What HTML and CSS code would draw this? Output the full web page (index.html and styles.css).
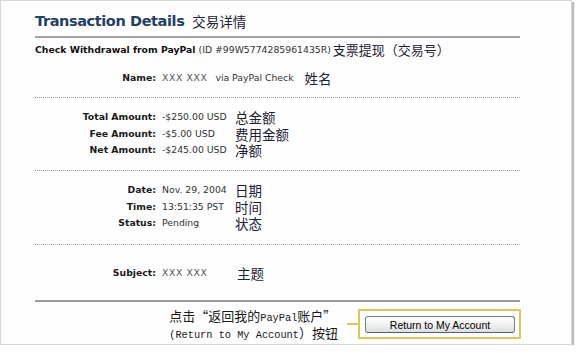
FILE: index.html
```html
<!DOCTYPE html>
<html lang="zh-CN">
<head>
  <meta charset="UTF-8">
  <meta name="viewport" content="width=device-width, initial-scale=1.0">
  <title>Transaction Details</title>
  <link rel="stylesheet" href="styles.css">
</head>
<body>
  <div class="frame">
    <h1 class="title">
      <span class="title-en">Transaction Details</span>
      <span class="cn title-cn">交易详情</span>
    </h1>

    <div class="headline">
      <b>Check Withdrawal from PayPal</b>
      <span class="txn-id">(ID #99W5774285961435R)</span>
      <span class="cn head-cn">支票提现（交易号）</span>
    </div>

    <div class="section name-section">
      <div class="row">
        <span class="label">Name:</span>
        <span class="value"><span class="xxx">XXX XXX</span><span class="via">via PayPal Check</span></span>
        <span class="cn note name-note">姓名</span>
      </div>
    </div>

    <div class="section amount-section">
      <div class="row">
        <span class="label">Total Amount:</span>
        <span class="value">-$250.00 USD</span>
        <span class="cn note">总金额</span>
      </div>
      <div class="row">
        <span class="label">Fee Amount:</span>
        <span class="value">-$5.00 USD</span>
        <span class="cn note">费用金额</span>
      </div>
      <div class="row">
        <span class="label">Net Amount:</span>
        <span class="value">-$245.00 USD</span>
        <span class="cn note">净额</span>
      </div>
    </div>

    <div class="section date-section">
      <div class="row">
        <span class="label">Date:</span>
        <span class="value">Nov. 29, 2004</span>
        <span class="cn note">日期</span>
      </div>
      <div class="row">
        <span class="label">Time:</span>
        <span class="value">13:51:35 PST</span>
        <span class="cn note">时间</span>
      </div>
      <div class="row">
        <span class="label">Status:</span>
        <span class="value">Pending</span>
        <span class="cn note">状态</span>
      </div>
    </div>

    <div class="section subject-section">
      <div class="row">
        <span class="label">Subject:</span>
        <span class="value"><span class="xxx">XXX XXX</span></span>
        <span class="cn note subject-note">主题</span>
      </div>
    </div>

    <div class="footer">
      <div class="hint">
        点击“返回我的<span class="mono">PayPal</span>账户”<br>
        <span class="mono">(Return to My Account</span>）按钮
      </div>
      <div class="connector"></div>
      <div class="callout">
        <button type="button" class="btn">Return to My Account</button>
      </div>
    </div>
  </div>
</body>
</html>
```

FILE: styles.css
```css
body {
  margin: 0;
  background-color: #fff;
  font-family: "DejaVu Sans", Verdana, sans-serif;
  color: #333;
}

.frame {
  box-sizing: border-box;
  width: 572px;
  height: 345px;
  padding: 11px 51px 0 34px;
  background-color: #fdfefd;
  border: 1px solid #d6d6d6;
  box-shadow: 2px 2px 1px #bdbdbd;
}

.cn {
  font-family: "Noto Sans CJK SC", sans-serif;
  font-weight: normal;
  color: #1d2133;
}

/* title */
.title {
  display: flex;
  margin: 0;
  padding-bottom: 6px;
  border-bottom: 2px solid #a4a4a4;
  line-height: 18px;
  height: 18px;
}

.title-en {
  font-size: 14.5px;
  letter-spacing: -0.4px;
  font-weight: bold;
  color: #233f66;
}

.title-cn {
  font-size: 13.5px;
  margin-left: 8px;
}

/* headline */
.headline {
  display: flex;
  margin-top: 5px;
  height: 14px;
  line-height: 14px;
  font-size: 9.3px;
  color: #111;
}

.txn-id {
  margin-left: 3px;
  color: #333;
}

.head-cn {
  font-size: 13px;
  margin-left: 2px;
}

/* detail sections */
.section {
  border-bottom: 1px dotted #9a9a9a;
}

.name-section {
  padding: 12.5px 0 11px;
}

.amount-section {
  padding: 11.25px 0;
}

.date-section {
  padding: 11.25px 0 12.25px;
}

.subject-section {
  padding: 19.75px 0 18.75px;
  border-bottom: 2px solid #9c9c9c;
}

.row {
  display: flex;
  height: 16.5px;
  line-height: 16.5px;
  font-size: 9.3px;
}

.label {
  flex: none;
  width: 121px;
  text-align: right;
  font-weight: bold;
  color: #1a1a1a;
}

.value {
  flex: none;
  min-width: 73px;
  margin-left: 6px;
  color: #333;
}

.xxx {
  color: #555;
  letter-spacing: 0.6px;
}

.via {
  margin-left: 8px;
}

.note {
  font-size: 13.5px;
}

.name-note {
  margin-left: 11px;
}

.subject-note {
  margin-left: 2px;
}

/* footer with the button */
.footer {
  display: flex;
  justify-content: flex-end;
  align-items: center;
  padding-top: 5px;
  margin-right: -1px;
}

.hint {
  font-family: "Noto Sans CJK SC", sans-serif;
  font-size: 13px;
  line-height: 17px;
  color: #1a1a1a;
}

.mono {
  font-family: "Liberation Mono", monospace;
  font-size: 10.3px;
  line-height: 1;
}

.connector {
  width: 11px;
  height: 2px;
  margin-left: 9px;
  background-color: #dcc462;
}

.callout {
  padding: 5px 4px 4px 5px;
  border: 2px solid #dcc462;
}

.btn {
  display: block;
  box-sizing: border-box;
  width: 150px;
  height: 17px;
  padding: 0;
  font-family: "Liberation Sans", Arial, sans-serif;
  font-size: 10.5px;
  color: #000;
  background: linear-gradient(#ffffff, #f1f1f1 50%, #dedede);
  border: 1px solid #6d7f9b;
  border-bottom-color: #4e607c;
  border-radius: 3px;
}
```
